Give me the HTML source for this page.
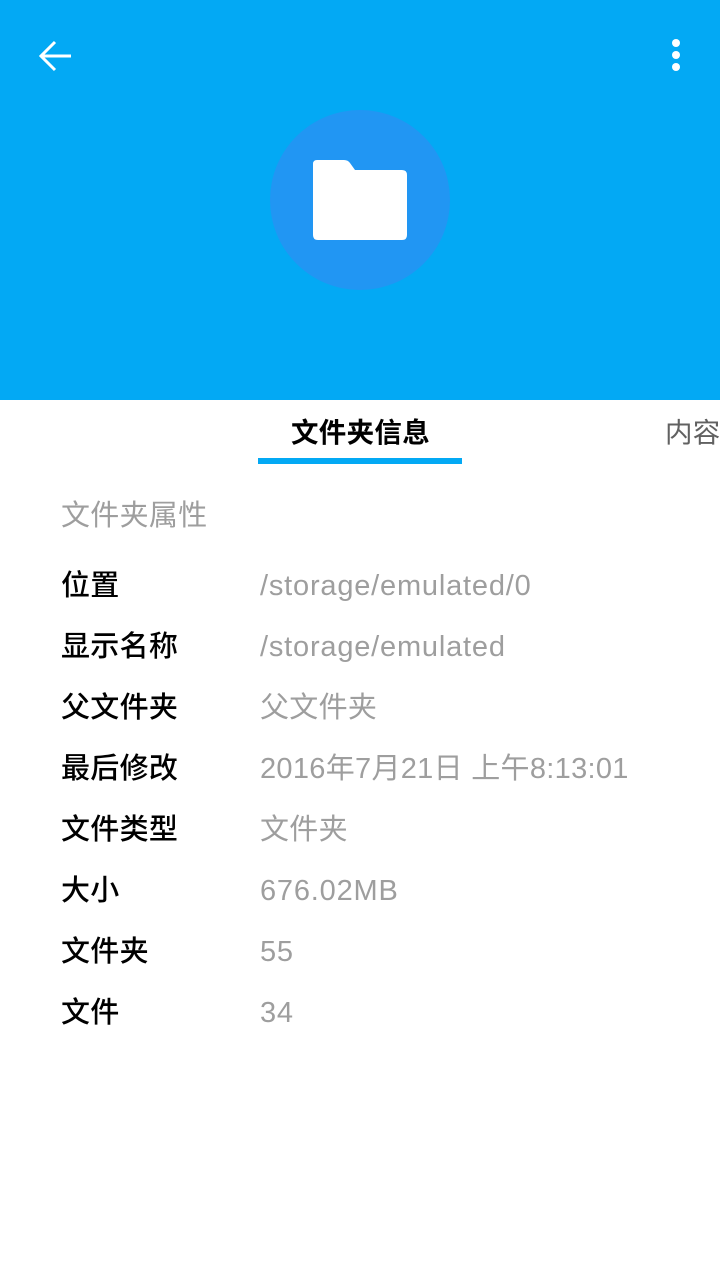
<!DOCTYPE html>
<html><head><meta charset="utf-8"><style>
body{margin:0;width:720px;height:1280px;background:#fff;position:relative;overflow:hidden;font-family:"Liberation Sans","Noto Sans CJK SC",sans-serif}
.hdr{position:absolute;left:0;top:0;width:720px;height:400px;background:#03A9F4}
.circ{position:absolute;left:270px;top:110px;width:180px;height:180px;border-radius:50%;background:#2196F3}
.t{position:absolute;white-space:nowrap;font-size:29px;line-height:30px;letter-spacing:0.8px}
.l{left:61px;color:#000;font-weight:500;letter-spacing:0.3px}
.v{left:260px;color:#9e9e9e}
</style></head><body>
<div class="hdr"></div>
<svg style="position:absolute;left:36px;top:36px" width="40" height="40" viewBox="0 0 40 40"><path d="M35 20H6M19 6L5 20l14 14" stroke="#fff" stroke-width="3" fill="none"/></svg>
<svg style="position:absolute;left:666px;top:36px" width="20" height="40" viewBox="0 0 20 40"><circle cx="10" cy="7" r="4" fill="#fff"/><circle cx="10" cy="19" r="4" fill="#fff"/><circle cx="10" cy="31" r="4" fill="#fff"/></svg>
<div class="circ"></div>
<svg style="position:absolute;left:312px;top:158px" width="96" height="84" viewBox="0 0 96 84"><path d="M5 2H32Q36 2 38 5L43 12H90Q95 12 95 17V77Q95 82 90 82H6Q1 82 1 77V6Q1 2 5 2Z" fill="#fff"/></svg>
<div class="t" style="left:291px;top:418px;font-weight:bold;color:#000;font-size:27.5px;letter-spacing:0.3px">文件夹信息</div>
<div style="position:absolute;left:258px;top:458px;width:204px;height:6px;background:#03A9F4"></div>
<div class="t" style="left:665px;top:418px;color:#616161;font-size:27.5px;letter-spacing:0.3px">内容</div>
<div class="t" style="left:61px;top:501px;color:#9e9e9e;letter-spacing:0.3px">文件夹属性</div>
<div class="t l" style="top:571px">位置</div><div class="t v" style="top:571px">/storage/emulated/0</div>
<div class="t l" style="top:632px">显示名称</div><div class="t v" style="top:632px">/storage/emulated</div>
<div class="t l" style="top:693px">父文件夹</div><div class="t v" style="top:693px;letter-spacing:0.3px">父文件夹</div>
<div class="t l" style="top:754px">最后修改</div><div class="t v" style="top:754px;letter-spacing:0.3px">2016年7月21日 上午8:13:01</div>
<div class="t l" style="top:815px">文件类型</div><div class="t v" style="top:815px;letter-spacing:0.3px">文件夹</div>
<div class="t l" style="top:876px">大小</div><div class="t v" style="top:876px">676.02MB</div>
<div class="t l" style="top:937px">文件夹</div><div class="t v" style="top:937px">55</div>
<div class="t l" style="top:998px">文件</div><div class="t v" style="top:998px">34</div>
</body></html>
